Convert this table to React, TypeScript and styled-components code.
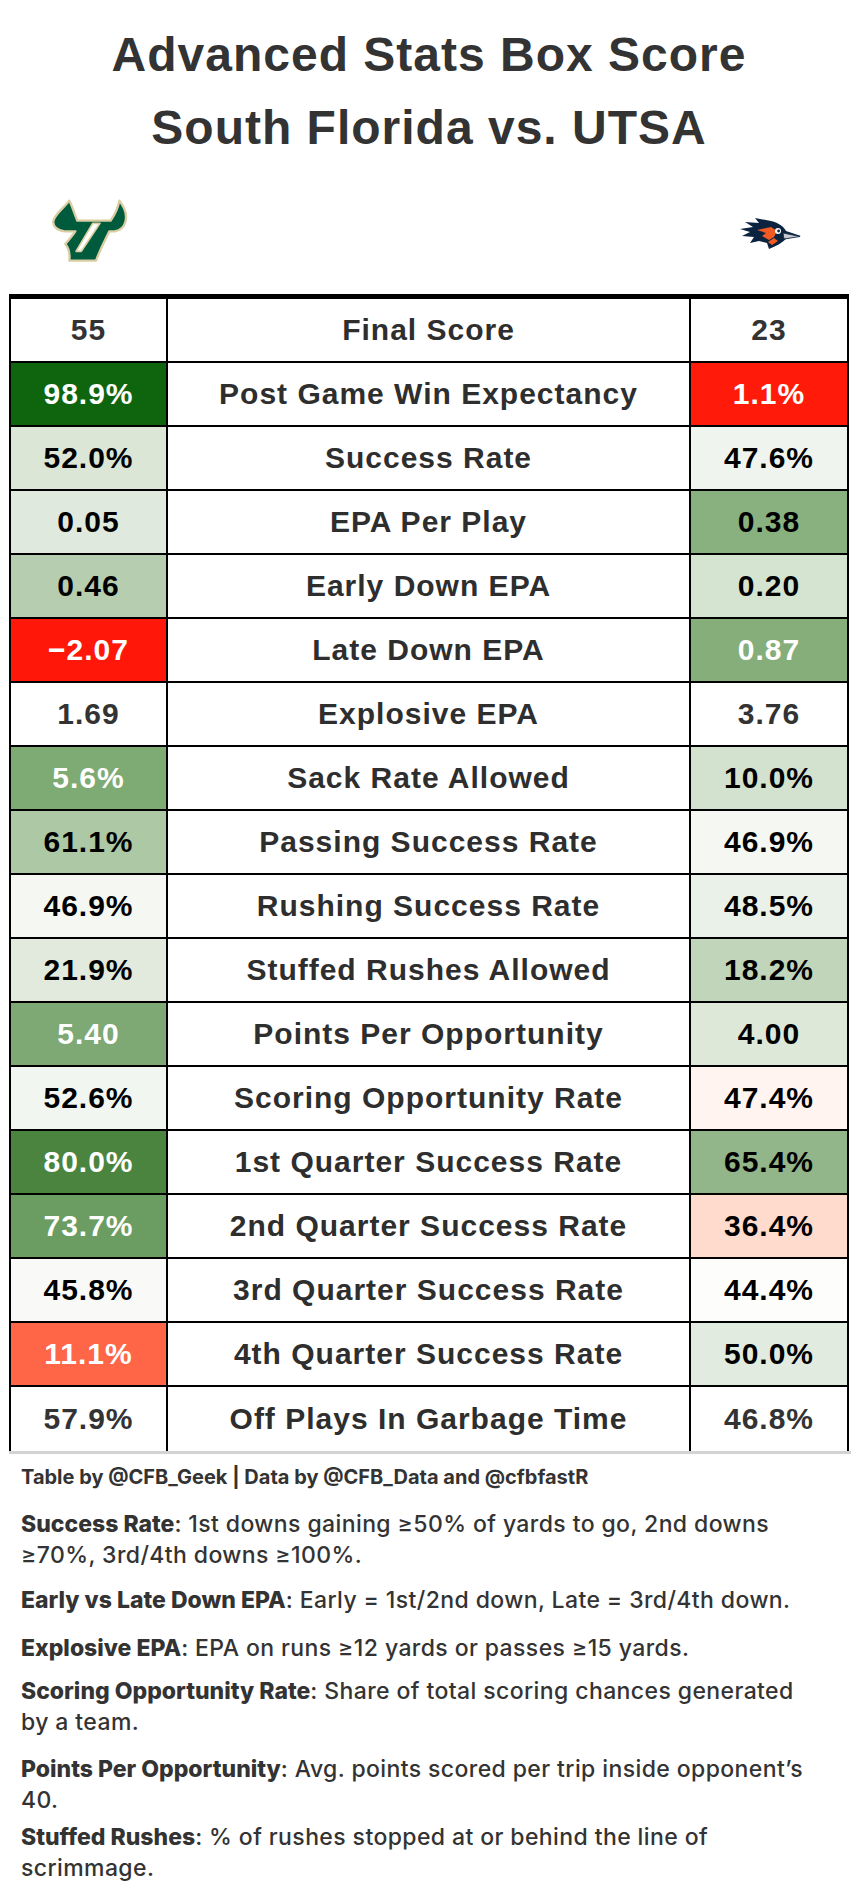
import styled, { createGlobalStyle } from 'styled-components';

const GlobalStyle = createGlobalStyle`
  html, body {
    margin: 0;
    padding: 0;
    background: #ffffff;
  }
  body {
    font-family: "Liberation Sans", Arial, sans-serif;
    color: #333333;
  }
`;

// rows: left value, left bg, label, right value, right bg
type Side = { value: string; bg: string; tone: 'plain' | 'dark' | 'light' };
type Row = { label: string; left: Side; right: Side };

const plain = (value: string): Side => ({ value, bg: '#ffffff', tone: 'plain' });
const light = (value: string, bg: string): Side => ({ value, bg, tone: 'light' });
const dark = (value: string, bg: string): Side => ({ value, bg, tone: 'dark' });

const rows: Row[] = [
  { label: 'Final Score', left: plain('55'), right: plain('23') },
  { label: 'Post Game Win Expectancy', left: dark('98.9%', '#0e650e'), right: dark('1.1%', '#ff1a0a') },
  { label: 'Success Rate', left: light('52.0%', '#dbe6d7'), right: light('47.6%', '#eff4ee') },
  { label: 'EPA Per Play', left: light('0.05', '#e0e9dd'), right: light('0.38', '#89b07f') },
  { label: 'Early Down EPA', left: light('0.46', '#b6cdaf'), right: light('0.20', '#d5e3d1') },
  { label: 'Late Down EPA', left: dark('\u22122.07', '#ff170a'), right: dark('0.87', '#85ae7b') },
  { label: 'Explosive EPA', left: plain('1.69'), right: plain('3.76') },
  { label: 'Sack Rate Allowed', left: dark('5.6%', '#7eaa74'), right: light('10.0%', '#d3e2cf') },
  { label: 'Passing Success Rate', left: light('61.1%', '#adc8a5'), right: light('46.9%', '#f4f7f2') },
  { label: 'Rushing Success Rate', left: light('46.9%', '#f4f7f2'), right: light('48.5%', '#eaf1e8') },
  { label: 'Stuffed Rushes Allowed', left: light('21.9%', '#e1eadd'), right: light('18.2%', '#c0d5ba') },
  { label: 'Points Per Opportunity', left: dark('5.40', '#7ea874'), right: light('4.00', '#dde8d9') },
  { label: 'Scoring Opportunity Rate', left: light('52.6%', '#f2f6f0'), right: light('47.4%', '#fff4f0') },
  { label: '1st Quarter Success Rate', left: dark('80.0%', '#4a843f'), right: light('65.4%', '#93b58a') },
  { label: '2nd Quarter Success Rate', left: dark('73.7%', '#6b9c61'), right: light('36.4%', '#ffdbcd') },
  { label: '3rd Quarter Success Rate', left: light('45.8%', '#f9faf8'), right: light('44.4%', '#fdfdfc') },
  { label: '4th Quarter Success Rate', left: dark('11.1%', '#ff6647'), right: light('50.0%', '#e2ebdf') },
  { label: 'Off Plays In Garbage Time', left: plain('57.9%'), right: plain('46.8%') },
];

const notes = [
  {
    term: 'Success Rate',
    lines: ['1st downs gaining \u226550% of yards to go, 2nd downs', '\u226570%, 3rd/4th downs \u2265100%.'],
    gap: 14,
  },
  { term: 'Early vs Late Down EPA', lines: ['Early = 1st/2nd down, Late = 3rd/4th down.'], gap: 17 },
  { term: 'Explosive EPA', lines: ['EPA on runs \u226512 yards or passes \u226515 yards.'], gap: 12 },
  {
    term: 'Scoring Opportunity Rate',
    lines: ['Share of total scoring chances generated', 'by a team.'],
    gap: 16,
  },
  {
    term: 'Points Per Opportunity',
    lines: ['Avg. points scored per trip inside opponent\u2019s', '40.'],
    gap: 6,
  },
  {
    term: 'Stuffed Rushes',
    lines: ['% of rushes stopped at or behind the line of', 'scrimmage.'],
    gap: 0,
  },
];

const UsfLogo = () => (
  <svg width="90" height="72" viewBox="0 0 270 216">
    <path
      d="M76 8 C84 22 90 45 100 68 L200 68 C212 50 222 30 226 8 C240 25 250 50 244 72 C240 88 228 97 212 100 L196 100 C184 125 170 150 156 188 L76 188 C78 170 74 150 64 138 C72 128 84 115 94 100 L62 100 C40 98 26 85 28 70 C30 50 60 30 76 8 Z"
      fill="#005a3c"
      stroke="#d9cea3"
      strokeWidth="7"
      strokeLinejoin="round"
    />
    <path d="M146 76 L168 76 L112 160 L96 160 Z" fill="#ffffff" stroke="#d9cea3" strokeWidth="5" strokeLinejoin="round" />
  </svg>
);

const UtsaLogo = () => (
  <svg width="64" height="32" viewBox="0 0 64 32">
    <path
      d="M2 11 L15 9 L7 4 L21 5 L17 0 L33 3 C41 5 46 9 48 13 L63 18 L48 21 C44 25 38 28 31 31 L29 25 L21 23 L12 25 L16 19 L4 18 L12 14 Z"
      fill="#0c2340"
    />
    <path d="M19 12 L33 9 L39 13 L36 19 L31 22 L24 18 L28 15 Z" fill="#f15a22" />
    <path d="M30 24 L36 20 L40 23 L34 27 Z" fill="#f15a22" />
    <circle cx="40" cy="13" r="3" fill="#ffffff" />
    <circle cx="40.6" cy="13" r="1.4" fill="#0c2340" />
    <path d="M45 15 L62 18.5 L46 21 Z" fill="#c8ccd2" stroke="#0c2340" strokeWidth="0.8" />
  </svg>
);

export default function App() {
  return (
    <Page>
      <GlobalStyle />
      <Title>
        Advanced Stats Box Score
        <br />
        South Florida vs. UTSA
      </Title>

      <LogoRow>
        <UsfLogo />
        <UtsaLogo />
      </LogoRow>

      <TableWrap>
        <Table>
          {rows.map((row, index) => (
            <TableRow key={index} $last={index === rows.length - 1}>
              <ValueCell $bg={row.left.bg} $tone={row.left.tone}>
                {row.left.value}
              </ValueCell>
              <LabelCell>{row.label}</LabelCell>
              <ValueCell $bg={row.right.bg} $tone={row.right.tone} $end>
                {row.right.value}
              </ValueCell>
            </TableRow>
          ))}
        </Table>
      </TableWrap>

      <Footer>
        <Credit>Table by @CFB_Geek | Data by @CFB_Data and @cfbfastR</Credit>
        {notes.map((note, index) => (
          <Note key={index} $gap={note.gap}>
            <Term>{note.term}</Term>:{' '}
            {note.lines.map((line, i) => (
              <span key={i}>
                {i > 0 && <br />}
                {line}
              </span>
            ))}
          </Note>
        ))}
      </Footer>
    </Page>
  );
}

const Page = styled.div`
  width: 858px;
  background: #ffffff;
`;

const Title = styled.h1`
  margin: 0;
  padding-top: 18px;
  text-align: center;
  font-family: "Liberation Sans", Arial, sans-serif;
  font-weight: 700;
  font-size: 48px;
  line-height: 73px;
  letter-spacing: 1px;
  color: #333333;
`;

const LogoRow = styled.div`
  display: flex;
  justify-content: space-between;
  align-items: center;
  padding: 34px 56px 24px 44px;
`;

const TableWrap = styled.div`
  margin-left: 9px;
  width: 842px;
  border-bottom: 3px solid #d3d3d3;
`;

const Table = styled.div`
  width: 840px;
  box-sizing: border-box;
  border-top: 5px solid #000000;
  border-left: 2px solid #000000;
  border-right: 2px solid #000000;
`;

const TableRow = styled.div<{ $last?: boolean }>`
  display: grid;
  grid-template-columns: 157px 1fr 156px;
  height: 64px;
  box-sizing: border-box;
  border-bottom: ${({ $last }) => ($last ? 'none' : '2px solid #000000')};
`;

const cellText = `
  display: flex;
  align-items: center;
  justify-content: center;
  font-family: "Liberation Sans", Arial, sans-serif;
  font-weight: 700;
  font-size: 30px;
  letter-spacing: 1px;
  white-space: nowrap;
`;

const ValueCell = styled.div<{ $bg: string; $tone: 'plain' | 'dark' | 'light'; $end?: boolean }>`
  ${cellText}
  background: ${({ $bg }) => $bg};
  color: ${({ $tone }) => ($tone === 'dark' ? '#ffffff' : $tone === 'light' ? '#000000' : '#333333')};
  border-right: ${({ $end }) => ($end ? 'none' : '2px solid #000000')};
`;

const LabelCell = styled.div`
  ${cellText}
  color: #2e2e2e;
  border-right: 2px solid #000000;
`;

const Footer = styled.div`
  padding: 8px 0 0 21px;
  font-family: Inter, "Liberation Sans", sans-serif;
  color: #333333;
`;

const Credit = styled.div`
  font-size: 20px;
  font-weight: 700;
  line-height: 31px;
  margin-bottom: 16px;
`;

const Note = styled.p<{ $gap: number }>`
  margin: 0 0 ${({ $gap }) => $gap}px;
  font-size: 23px;
  font-weight: 500;
  letter-spacing: 0.4px;
  line-height: 31px;
  white-space: nowrap;
`;

const Term = styled.span`
  font-weight: 800;
  letter-spacing: 0;
`;
